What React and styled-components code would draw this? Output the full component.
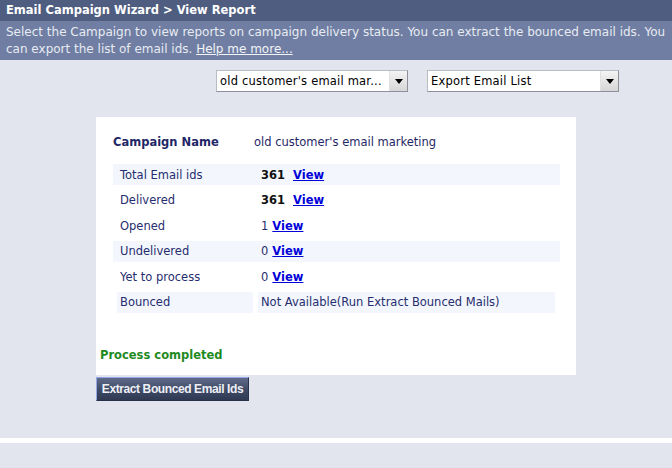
import React from "react";
import styled, { createGlobalStyle } from "styled-components";

const GlobalStyle = createGlobalStyle`
  html, body {
    margin: 0;
    padding: 0;
    background: #e2e5ee;
  }
  body {
    font-family: "DejaVu Sans", Verdana, sans-serif;
    font-size: 11px;
  }
`;

const Page = styled.div`
  width: 672px;
  min-height: 468px;
  background: #e2e5ee;
  display: flex;
  flex-direction: column;
`;

const TitleBar = styled.div`
  height: 21px;
  line-height: 21px;
  background: #4e5d80;
  color: #ffffff;
  font-weight: bold;
  font-size: 11.5px;
  padding-left: 6px;
`;

const Intro = styled.div`
  background: #6f7ea2;
  color: #e8ebf3;
  padding: 3px 0 2px 6px;
  line-height: 17px;
  height: 34px;
  font-size: 12px;
  letter-spacing: 0;
  white-space: nowrap;
  overflow: hidden;

  a {
    color: #f2f4f8;
    text-decoration: underline;
  }
`;

const Controls = styled.div`
  display: flex;
  gap: 19px;
  padding: 10px 0 0 216px;
`;

const Select = styled.div`
  width: ${p => p.width}px;
  height: 22px;
  box-sizing: border-box;
  background: #ffffff;
  border: 1px solid #b9bcc4;
  border-right-color: #8d9099;
  border-bottom-color: #8d9099;
  display: flex;
  align-items: center;
  font-size: 11.5px;
  color: #000;
`;

const SelectText = styled.span`
  flex: 1;
  padding-left: 3px;
  white-space: nowrap;
  overflow: hidden;
  letter-spacing: 0.2px;
`;

const Arrow = styled.span`
  width: 17px;
  height: 20px;
  background: linear-gradient(#f4f4f4, #d6d6d6);
  border-left: 1px solid #e0e0e0;
  display: flex;
  align-items: center;
  justify-content: center;

  &::after {
    content: "";
    border-left: 4px solid transparent;
    border-right: 4px solid transparent;
    border-top: 5px solid #000;
  }
`;

const Panel = styled.div`
  margin: 25px 0 0 96px;
  width: 480px;
  height: 258px;
  background: #ffffff;
  box-sizing: border-box;
  padding: 16px 0 0 17px;
  display: flex;
  flex-direction: column;
`;

const NameRow = styled.div`
  display: flex;
  height: 18px;
  align-items: center;
  color: #1f2766;
  font-size: 11.5px;
`;

const NameLabel = styled.span`
  width: 141px;
  font-weight: bold;
`;

const Stats = styled.div`
  margin-top: 13px;
  width: 447px;
  display: flex;
  flex-direction: column;
  gap: 4.6px;
`;

const Row = styled.div`
  height: 21px;
  display: flex;
  align-items: center;
  background: ${p => (p.shade ? "#f3f7fd" : "transparent")};
  color: #262d6e;
  font-size: 11.5px;
`;

const Label = styled.span`
  width: 141px;
  padding-left: 7px;
`;

const Value = styled.span`
  color: ${p => (p.strong ? "#111" : "#262d6e")};
  font-weight: ${p => (p.strong ? "bold" : "normal")};
`;

const ViewLink = styled.a`
  color: #0000d8;
  font-weight: bold;
  text-decoration: underline;
  margin-left: ${p => p.gap}px;
`;

const SplitRow = styled.div`
  height: 21px;
  display: flex;
  gap: 5px;
  padding-left: 4px;
  color: #262d6e;
  font-size: 11.5px;
`;

const Cell = styled.span`
  background: #f3f7fd;
  display: flex;
  align-items: center;
  width: ${p => p.width}px;
  padding-left: ${p => p.pad}px;
  box-sizing: border-box;
`;

const Done = styled.div`
  margin: 35px 0 0 -13px;
  color: #1f8a1f;
  font-weight: bold;
  font-size: 11.5px;
`;

const ExtractButton = styled.button`
  margin: 2px 0 0 96px;
  width: 153px;
  height: 24px;
  padding: 0;
  background: linear-gradient(#5e6a88, #3f4a67 55%, #2f3952);
  border: 1px solid #2a3249;
  border-top-color: #93a6e6;
  border-left-color: #93a6e6;
  color: #eef0f6;
  font-family: "Liberation Sans", Arial, sans-serif;
  font-weight: bold;
  font-size: 12px;
  letter-spacing: -0.4px;
  align-self: flex-start;
`;

const Footer = styled.div`
  margin-top: 37px;
  height: 5px;
  background: #ffffff;
`;

const stats = [
  { label: "Total Email ids", value: "361", strong: true, shade: true, gap: 8 },
  { label: "Delivered", value: "361", strong: true, gap: 8 },
  { label: "Opened", value: "1", gap: 4 },
  { label: "Undelivered", value: "0", shade: true, gap: 4 },
  { label: "Yet to process", value: "0", gap: 4 },
];

export default function App() {
  return (
    <Page>
      <GlobalStyle />
      <TitleBar>Email Campaign Wizard &gt; View Report</TitleBar>
      <Intro>
        Select the Campaign to view reports on campaign delivery status. You can extract the bounced email ids. You
        <br />
        can export the list of email ids. <a href="#">Help me more...</a>
      </Intro>

      <Controls>
        <Select width={192}>
          <SelectText>old customer's email mar...</SelectText>
          <Arrow />
        </Select>
        <Select width={192}>
          <SelectText>Export Email List</SelectText>
          <Arrow />
        </Select>
      </Controls>

      <Panel>
        <NameRow>
          <NameLabel>Campaign Name</NameLabel>
          <span>old customer's email marketing</span>
        </NameRow>

        <Stats>
          {stats.map(s => (
            <Row key={s.label} shade={s.shade}>
              <Label>{s.label}</Label>
              <Value strong={s.strong}>{s.value}</Value>
              <ViewLink href="#" gap={s.gap}>View</ViewLink>
            </Row>
          ))}
          <SplitRow>
            <Cell width={136} pad={3}>Bounced</Cell>
            <Cell width={297} pad={3}>Not Available(Run Extract Bounced Mails)</Cell>
          </SplitRow>
        </Stats>

        <Done>Process completed</Done>
      </Panel>

      <ExtractButton>Extract Bounced Email Ids</ExtractButton>
      <Footer />
    </Page>
  );
}
